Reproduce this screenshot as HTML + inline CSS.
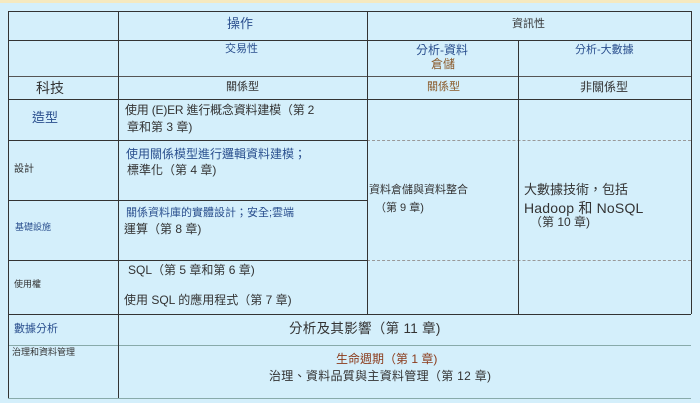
<!DOCTYPE html>
<html><head><meta charset="utf-8"><style>
body{margin:0;width:700px;height:403px;background:#d4effb;position:relative;overflow:hidden;font-family:"Liberation Sans","Noto Sans CJK TC",sans-serif;color:#333;}
.t{position:absolute;white-space:nowrap;line-height:1.3}
.h{position:absolute;height:0;border-top:1px solid #333}
.v{position:absolute;width:0;border-left:1px solid #333}
.d{position:absolute;height:0;border-top:1px dashed #999}
.blue{color:#2a4f8e}
.brown{color:#8a5a2a}
</style></head><body>
<div style="position:absolute;left:0;top:0;width:700px;height:3px;background:#f5e9c0"></div>
<div class="h" style="left:8px;top:11px;width:683px"></div>
<div class="h" style="left:8px;top:40px;width:683px"></div>
<div class="h" style="left:8px;top:76px;width:683px;border-color:#555"></div>
<div class="h" style="left:8px;top:99px;width:683px"></div>
<div class="h" style="left:8px;top:140px;width:359px"></div>
<div class="d" style="left:367px;top:140px;width:324px"></div>
<div class="h" style="left:8px;top:200px;width:359px"></div>
<div class="h" style="left:8px;top:260px;width:359px"></div>
<div class="d" style="left:367px;top:260px;width:324px"></div>
<div class="h" style="left:8px;top:314px;width:683px"></div>
<div class="h" style="left:8px;top:345px;width:683px;border-color:#8aa"></div>
<div class="h" style="left:8px;top:398px;width:683px;border-color:#8aa"></div>
<div class="v" style="left:8px;top:11px;height:387px"></div>
<div class="v" style="left:118px;top:11px;height:387px"></div>
<div class="v" style="left:367px;top:11px;height:303px"></div>
<div class="v" style="left:518px;top:40px;height:274px"></div>
<div class="v" style="left:691px;top:11px;height:303px"></div>
<div class="t blue" style="left:227px;top:16px;font-size:13px">操作</div>
<div class="t" style="left:512px;top:17px;font-size:11px">資訊性</div>
<div class="t blue" style="left:225px;top:42px;font-size:11px">交易性</div>
<div class="t blue" style="left:416px;top:43px;font-size:12px">分析-資料</div>
<div class="t brown" style="left:431px;top:57px;font-size:12px">倉儲</div>
<div class="t blue" style="left:575px;top:43px;font-size:11px">分析-大數據</div>
<div class="t" style="left:36px;top:79px;font-size:14px">科技</div>
<div class="t" style="left:226px;top:80px;font-size:11px">關係型</div>
<div class="t brown" style="left:427px;top:80px;font-size:11px">關係型</div>
<div class="t" style="left:580px;top:80px;font-size:12px">非關係型</div>
<div class="t blue" style="left:32px;top:110px;font-size:13px">造型</div>
<div class="t" style="left:125px;top:103px;font-size:12px;letter-spacing:-0.2px">使用 (E)ER 進行概念資料建模（第 2</div>
<div class="t" style="left:127px;top:120px;font-size:12px">章和第 3 章)</div>
<div class="t blue" style="left:126px;top:147px;font-size:12px">使用關係模型進行邏輯資料建模；</div>
<div class="t" style="left:127px;top:163px;font-size:12px">標準化（第 4 章)</div>
<div class="t" style="left:14px;top:163px;font-size:10px">設計</div>
<div class="t" style="left:369px;top:183px;font-size:11px">資料倉儲與資料整合</div>
<div class="t" style="left:375px;top:201px;font-size:11px">（第 9 章)</div>
<div class="t" style="left:524px;top:182px;font-size:13px">大數據技術，包括</div>
<div class="t" style="left:524px;top:199px;font-size:14px;letter-spacing:0.2px">Hadoop 和 NoSQL</div>
<div class="t" style="left:530px;top:215px;font-size:12px">（第 10 章)</div>
<div class="t blue" style="left:126px;top:206px;font-size:11px">關係資料庫的實體設計；安全;雲端</div>
<div class="t" style="left:124px;top:222px;font-size:12px">運算（第 8 章)</div>
<div class="t blue" style="left:15px;top:222px;font-size:9px">基礎設施</div>
<div class="t" style="left:128px;top:263px;font-size:12px">SQL（第 5 章和第 6 章)</div>
<div class="t" style="left:124px;top:293px;font-size:12px">使用 SQL 的應用程式（第 7 章)</div>
<div class="t" style="left:14px;top:279px;font-size:9px">使用權</div>
<div class="t blue" style="left:14px;top:322px;font-size:11px">數據分析</div>
<div class="t" style="left:289px;top:320px;font-size:13.5px;letter-spacing:0.3px">分析及其影響（第 11 章)</div>
<div class="t" style="left:12px;top:347px;font-size:9px">治理和資料管理</div>
<div class="t" style="left:336px;top:352px;font-size:12px;color:#8a3a1a">生命週期（第 1 章)</div>
<div class="t" style="left:269px;top:369px;font-size:12px;letter-spacing:0.3px">治理、資料品質與主資料管理（第 12 章)</div>
</body></html>
